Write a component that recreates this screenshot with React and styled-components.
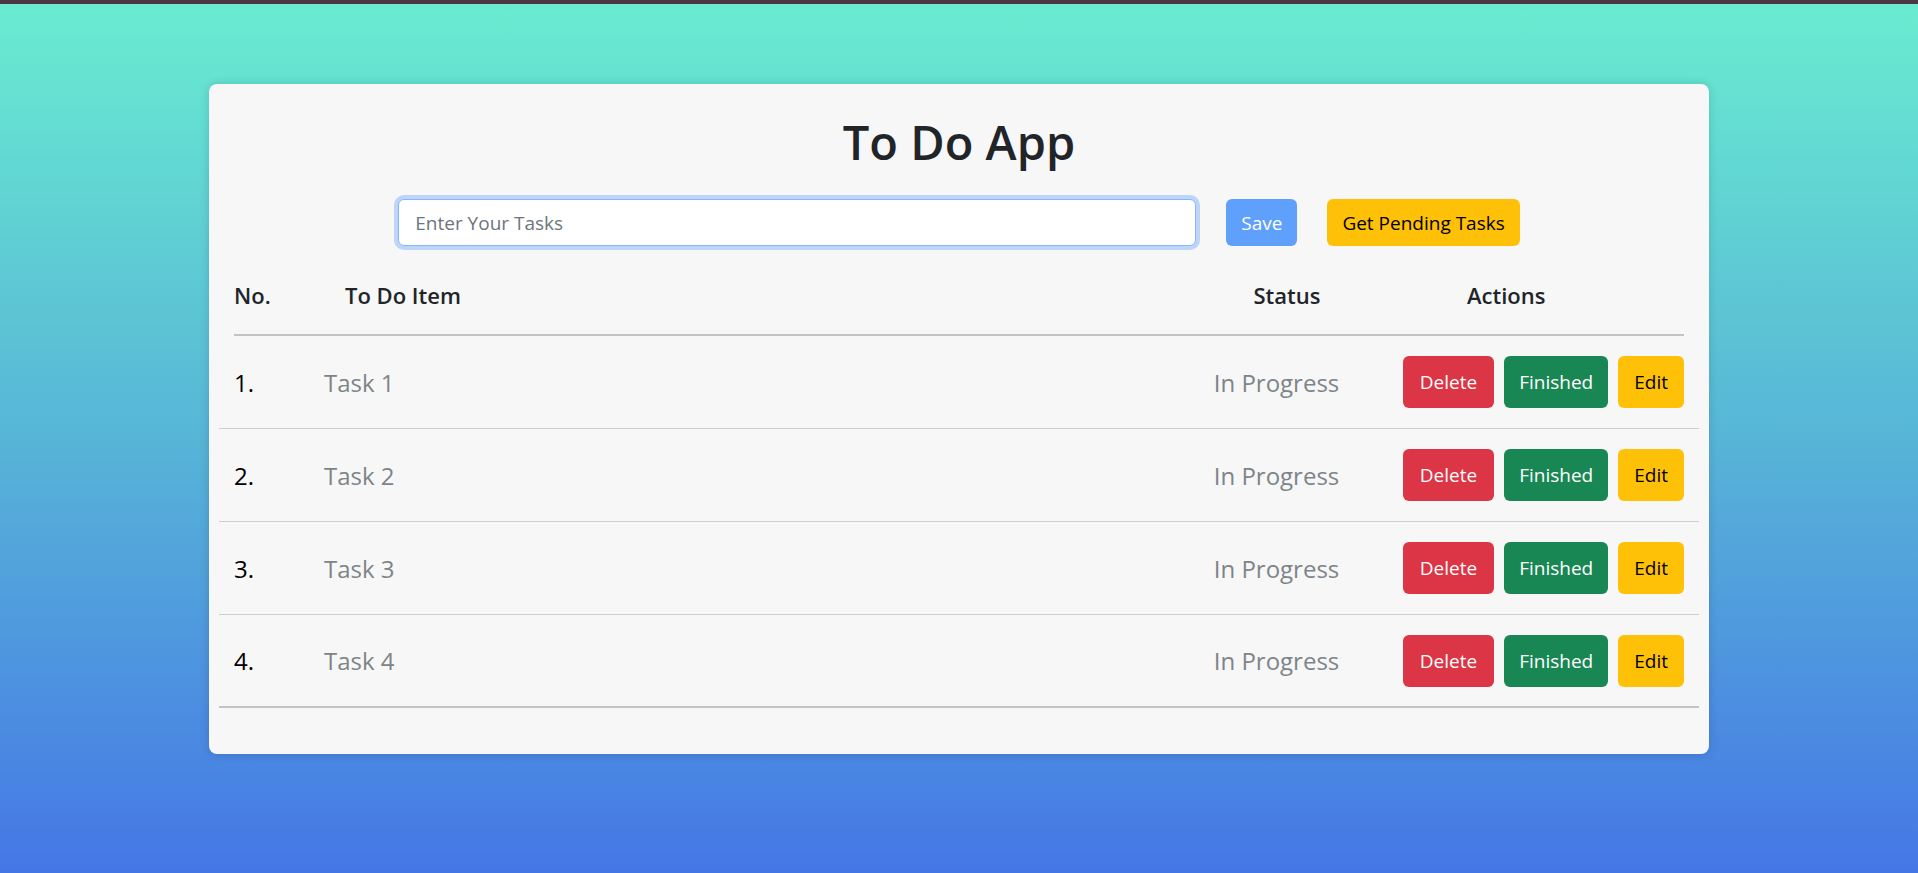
import React from "react";
import styled, { createGlobalStyle } from "styled-components";

const GlobalStyle = createGlobalStyle`
  * { box-sizing: border-box; }
  body {
    margin: 0;
    font-family: "Open Sans", "Noto Sans", sans-serif;
    color: #212529;
  }
`;

const Page = styled.div`
  min-height: 873px;
  background: linear-gradient(180deg, #69ecd0 0%, #57b5d7 50%, #4576e6 100%);
  border-top: 4px solid #4a3742;
  padding-top: 80px;
`;

const Card = styled.div`
  width: 1500px;
  margin: 0 auto;
  background: #f7f7f7;
  border-radius: 8px;
  box-shadow: 0 0 10px rgba(0, 0, 0, 0.15);
  padding: 29px 10px 46px;
`;

const Title = styled.h1`
  margin: 0;
  text-align: center;
  font-size: 47px;
  font-weight: 600;
  line-height: 58px;
  color: #212529;
`;

const Form = styled.div`
  display: flex;
  justify-content: center;
  align-items: center;
  gap: 30px;
  margin-top: 28px;
`;

const Input = styled.input`
  width: 798px;
  height: 47px;
  padding: 0 16px;
  font-family: inherit;
  font-size: 19px;
  color: #212529;
  background: #fff;
  border: 1px solid #86b7fe;
  border-radius: 6px;
  box-shadow: 0 0 0 4px rgba(13, 110, 253, 0.25);
  outline: none;
  &::placeholder {
    color: #6c757d;
  }
`;

const colors = {
  save: { bg: "#5ea0fb", fg: "#fff" },
  warning: { bg: "#ffc107", fg: "#000" },
  danger: { bg: "#dc3545", fg: "#fff" },
  success: { bg: "#198754", fg: "#fff" },
};

const Button = styled.button`
  height: ${(props) => (props.tall ? "52px" : "47px")};
  padding: 0 ${(props) => props.pad || 15}px;
  border: none;
  border-radius: 6px;
  font-family: inherit;
  font-size: 19px;
  background: ${(props) => colors[props.variant].bg};
  color: ${(props) => colors[props.variant].fg};
  cursor: pointer;
  white-space: nowrap;
`;

const HeaderRow = styled.div`
  display: grid;
  grid-template-columns: 111px 1fr 360px 217px;
  align-items: center;
  margin: 0 15px;
  padding: 34px 0 24px;
  border-bottom: 2px solid #c4c4c4;
  font-size: 22px;
  font-weight: 600;
  line-height: 30px;
  color: #212529;
`;

const HeaderCell = styled.div`
  text-align: ${(props) => props.align || "left"};
`;

const Row = styled.div`
  display: grid;
  grid-template-columns: 90px 1fr 255px 280px;
  align-items: center;
  height: 93px;
  padding: 0 15px;
  border-bottom: ${(props) => (props.last ? "2px solid #c4c4c4" : "1px solid #cfcfcf")};
  font-size: 24px;
`;

const Num = styled.div`
  color: #000;
`;

const Muted = styled.div`
  color: #7d8588;
  text-align: ${(props) => props.align || "left"};
`;

const Actions = styled.div`
  display: flex;
  justify-content: flex-end;
  gap: 10px;
`;

const tasks = ["Task 1", "Task 2", "Task 3", "Task 4"];

export default function App() {
  return (
    <>
      <GlobalStyle />
      <Page>
        <Card>
          <Title>To Do App</Title>
          <Form>
            <Input placeholder="Enter Your Tasks" />
            <Button variant="save">Save</Button>
            <Button variant="warning">Get Pending Tasks</Button>
          </Form>
          <HeaderRow>
            <HeaderCell>No.</HeaderCell>
            <HeaderCell>To Do Item</HeaderCell>
            <HeaderCell align="center">Status</HeaderCell>
            <HeaderCell>Actions</HeaderCell>
          </HeaderRow>
          {tasks.map((task, i) => (
            <Row key={task} last={i === tasks.length - 1}>
              <Num>{i + 1}.</Num>
              <Muted>{task}</Muted>
              <Muted align="center">In Progress</Muted>
              <Actions>
                <Button tall pad={17} variant="danger">Delete</Button>
                <Button tall variant="success">Finished</Button>
                <Button tall pad={16} variant="warning">Edit</Button>
              </Actions>
            </Row>
          ))}
        </Card>
      </Page>
    </>
  );
}
